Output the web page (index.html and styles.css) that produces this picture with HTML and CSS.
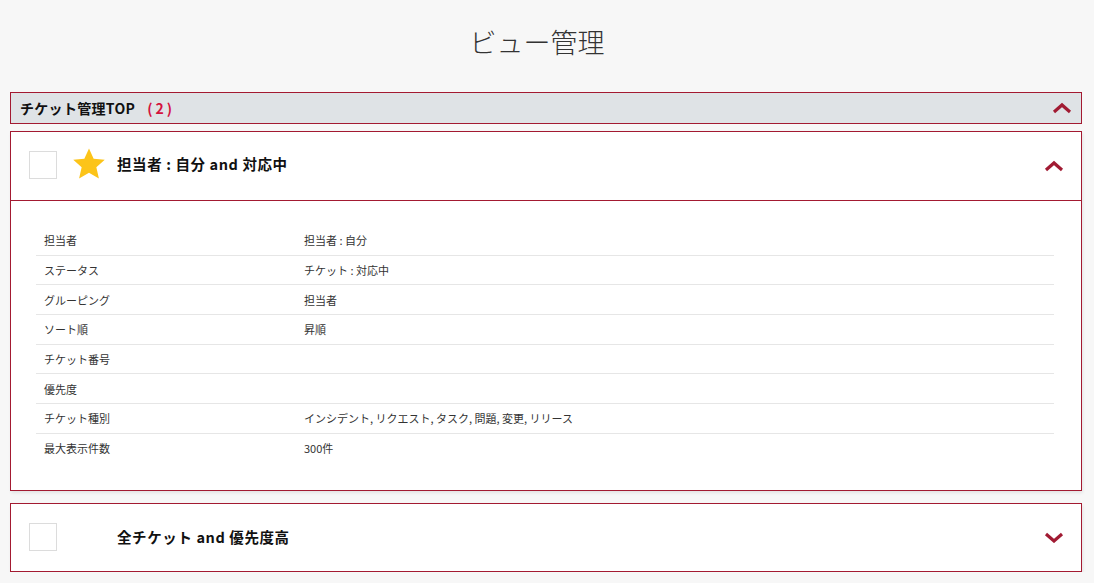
FILE: index.html
```html
<!DOCTYPE html>
<html lang="ja">
<head>
<meta charset="utf-8">
<title>ビュー管理</title>
<link rel="stylesheet" href="styles.css">
</head>
<body>
<h1 class="page-title">ビュー管理</h1>
<section class="group">
  <div class="group-head">
    <span class="group-name">チケット管理TOP</span><span class="group-count">(2)</span>
    <svg class="chev chev-group" viewBox="0 0 20 12" width="20" height="12"><polyline points="2,10 10,3 18,10" /></svg>
  </div>
  <div class="card">
    <div class="card-head">
      <span class="check"></span>
      <svg class="star" viewBox="0 0 24 24" width="36" height="36"><path d="M12 1.6l3.1 6.9 7.4.7-5.6 5 1.7 7.4L12 17.8 5.4 21.6l1.7-7.4-5.6-5 7.4-.7z"/></svg>
      <span class="card-title">担当者 : 自分 and 対応中</span>
      <svg class="chev chev-card" viewBox="0 0 20 12" width="20" height="12"><polyline points="2,10 10,3 18,10" /></svg>
    </div>
    <div class="card-body">
      <table class="detail">
        <tr><td class="k">担当者</td><td>担当者 : 自分</td></tr>
        <tr><td class="k">ステータス</td><td>チケット : 対応中</td></tr>
        <tr><td class="k">グルーピング</td><td>担当者</td></tr>
        <tr><td class="k">ソート順</td><td>昇順</td></tr>
        <tr><td class="k">チケット番号</td><td></td></tr>
        <tr><td class="k">優先度</td><td></td></tr>
        <tr><td class="k">チケット種別</td><td>インシデント, リクエスト, タスク, 問題, 変更, リリース</td></tr>
        <tr><td class="k">最大表示件数</td><td>300件</td></tr>
      </table>
    </div>
  </div>
  <div class="card">
    <div class="card-head card-head-closed">
      <span class="check"></span>
      <span class="star-space"></span>
      <span class="card-title">全チケット and 優先度高</span>
      <svg class="chev chev-card" viewBox="0 0 20 12" width="20" height="12"><polyline points="2,3 10,10 18,3" /></svg>
    </div>
  </div>
</section>
</body>
</html>
```

FILE: styles.css
```css
html, body {
  margin: 0;
  padding: 0;
  background: #f7f7f7;
  font-family: "Noto Sans CJK JP", "Noto Sans", sans-serif;
  color: #222;
}
.page-title {
  margin: 0;
  padding: 24px 20px 0 0;
  height: 68px;
  box-sizing: border-box;
  text-align: center;
  font-size: 27px;
  line-height: 36px;
  font-weight: 300;
  color: #333;
}
.group {
  margin: 24px 12px 0 10px;
}
.group-head {
  display: flex;
  align-items: center;
  height: 30px;
  padding: 0 9px;
  background: #dfe3e6;
  border: 1px solid #a31a31;
}
.group-name {
  font-size: 14px;
  font-weight: 700;
  color: #111;
  line-height: 20px;
  letter-spacing: 0.3px;
}
.group-count {
  margin-left: 12px;
  font-size: 14px;
  font-weight: 700;
  color: #d4123e;
  line-height: 20px;
  letter-spacing: 3px;
}
.chev {
  margin-left: auto;
  fill: none;
  stroke: #a11b33;
  stroke-width: 3.2;
}
.card {
  margin-top: 7px;
  background: #fff;
  border: 1px solid #a31a31;
  box-shadow: 1px 2px 3px rgba(0,0,0,0.08);
}
.card + .card {
  margin-top: 12px;
}
.card-head {
  display: flex;
  align-items: center;
  height: 68px;
  padding: 0 17px 0 18px;
}
.card-head-closed {
  height: 67px;
}
.card-body {
  border-top: 1px solid #a31a31;
  padding: 25px 27px 27px 25px;
}
.check {
  width: 26px;
  height: 26px;
  border: 1px solid #dcdcdc;
  background: #fff;
  flex: none;
  margin-top: -2px;
}
.star {
  margin-left: 14px;
  margin-top: -4px;
  fill: #fcc419;
  flex: none;
}
.star-space {
  width: 36px;
  margin-left: 14px;
  flex: none;
}
.card-title {
  margin-left: 10px;
  margin-top: -4px;
  font-size: 14.5px;
  font-weight: 700;
  color: #111;
  line-height: 20px;
  letter-spacing: 0.6px;
}
.card-head-closed .check {
  margin-top: 0;
}
.card-head-closed .card-title {
  margin-top: 0;
}
.detail {
  width: 100%;
  border-collapse: collapse;
  font-size: 11px;
  color: #333;
}
.detail td {
  height: 28.7px;
  padding: 0 8px;
  line-height: 16px;
  vertical-align: middle;
  border-top: 1px solid #e6e6e6;
}
.detail tr:first-child td {
  border-top: none;
}
.detail td.k {
  width: 244px;
}
```
